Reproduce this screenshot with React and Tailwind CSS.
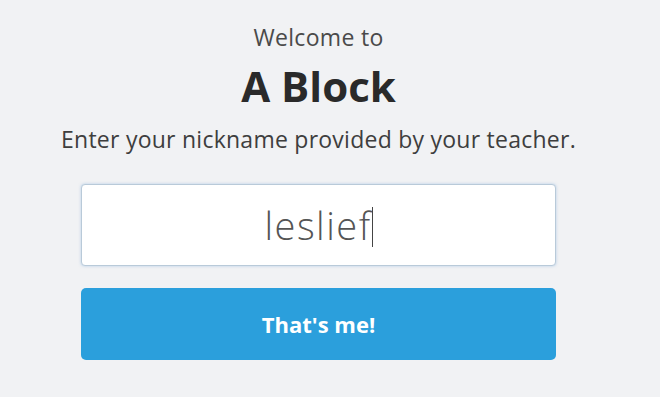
export default function App() {
  return (
    <div
      className="w-[660px] h-[397px] bg-[#f1f2f4] flex flex-col items-center overflow-hidden pr-[23px]"
      style={{ fontFamily: '"Open Sans", "Liberation Sans", sans-serif' }}
    >
      <p className="mt-[22px] text-[23px] leading-[30px] tracking-[0.3px] text-[#4a4a4a]">Welcome to</p>
      <h1 className="mt-[10px] text-[42px] leading-[48px] font-bold text-[#2a2a2a]">A Block</h1>
      <p className="mt-[14px] text-[23px] leading-[30px] tracking-[0.25px] text-[#3e3e3e]">
        Enter your nickname provided by your teacher.
      </p>
      <div className="mt-[30px] w-[475px] h-[82px] bg-white border border-[#b9cad9] rounded-[4px] shadow-[0_0_3px_rgba(120,170,220,0.5)] flex items-center justify-center">
        <span className="text-[38px] leading-[46px] font-light tracking-[1.5px] text-[#555]">leslief</span>
        <span className="w-px h-[40px] bg-[#444] mt-[4px]"></span>
      </div>
      <button className="mt-[22px] w-[475px] h-[72px] bg-[#2b9fdc] rounded-[5px] text-white text-[22px] font-bold">
        That's me!
      </button>
    </div>
  );
}
